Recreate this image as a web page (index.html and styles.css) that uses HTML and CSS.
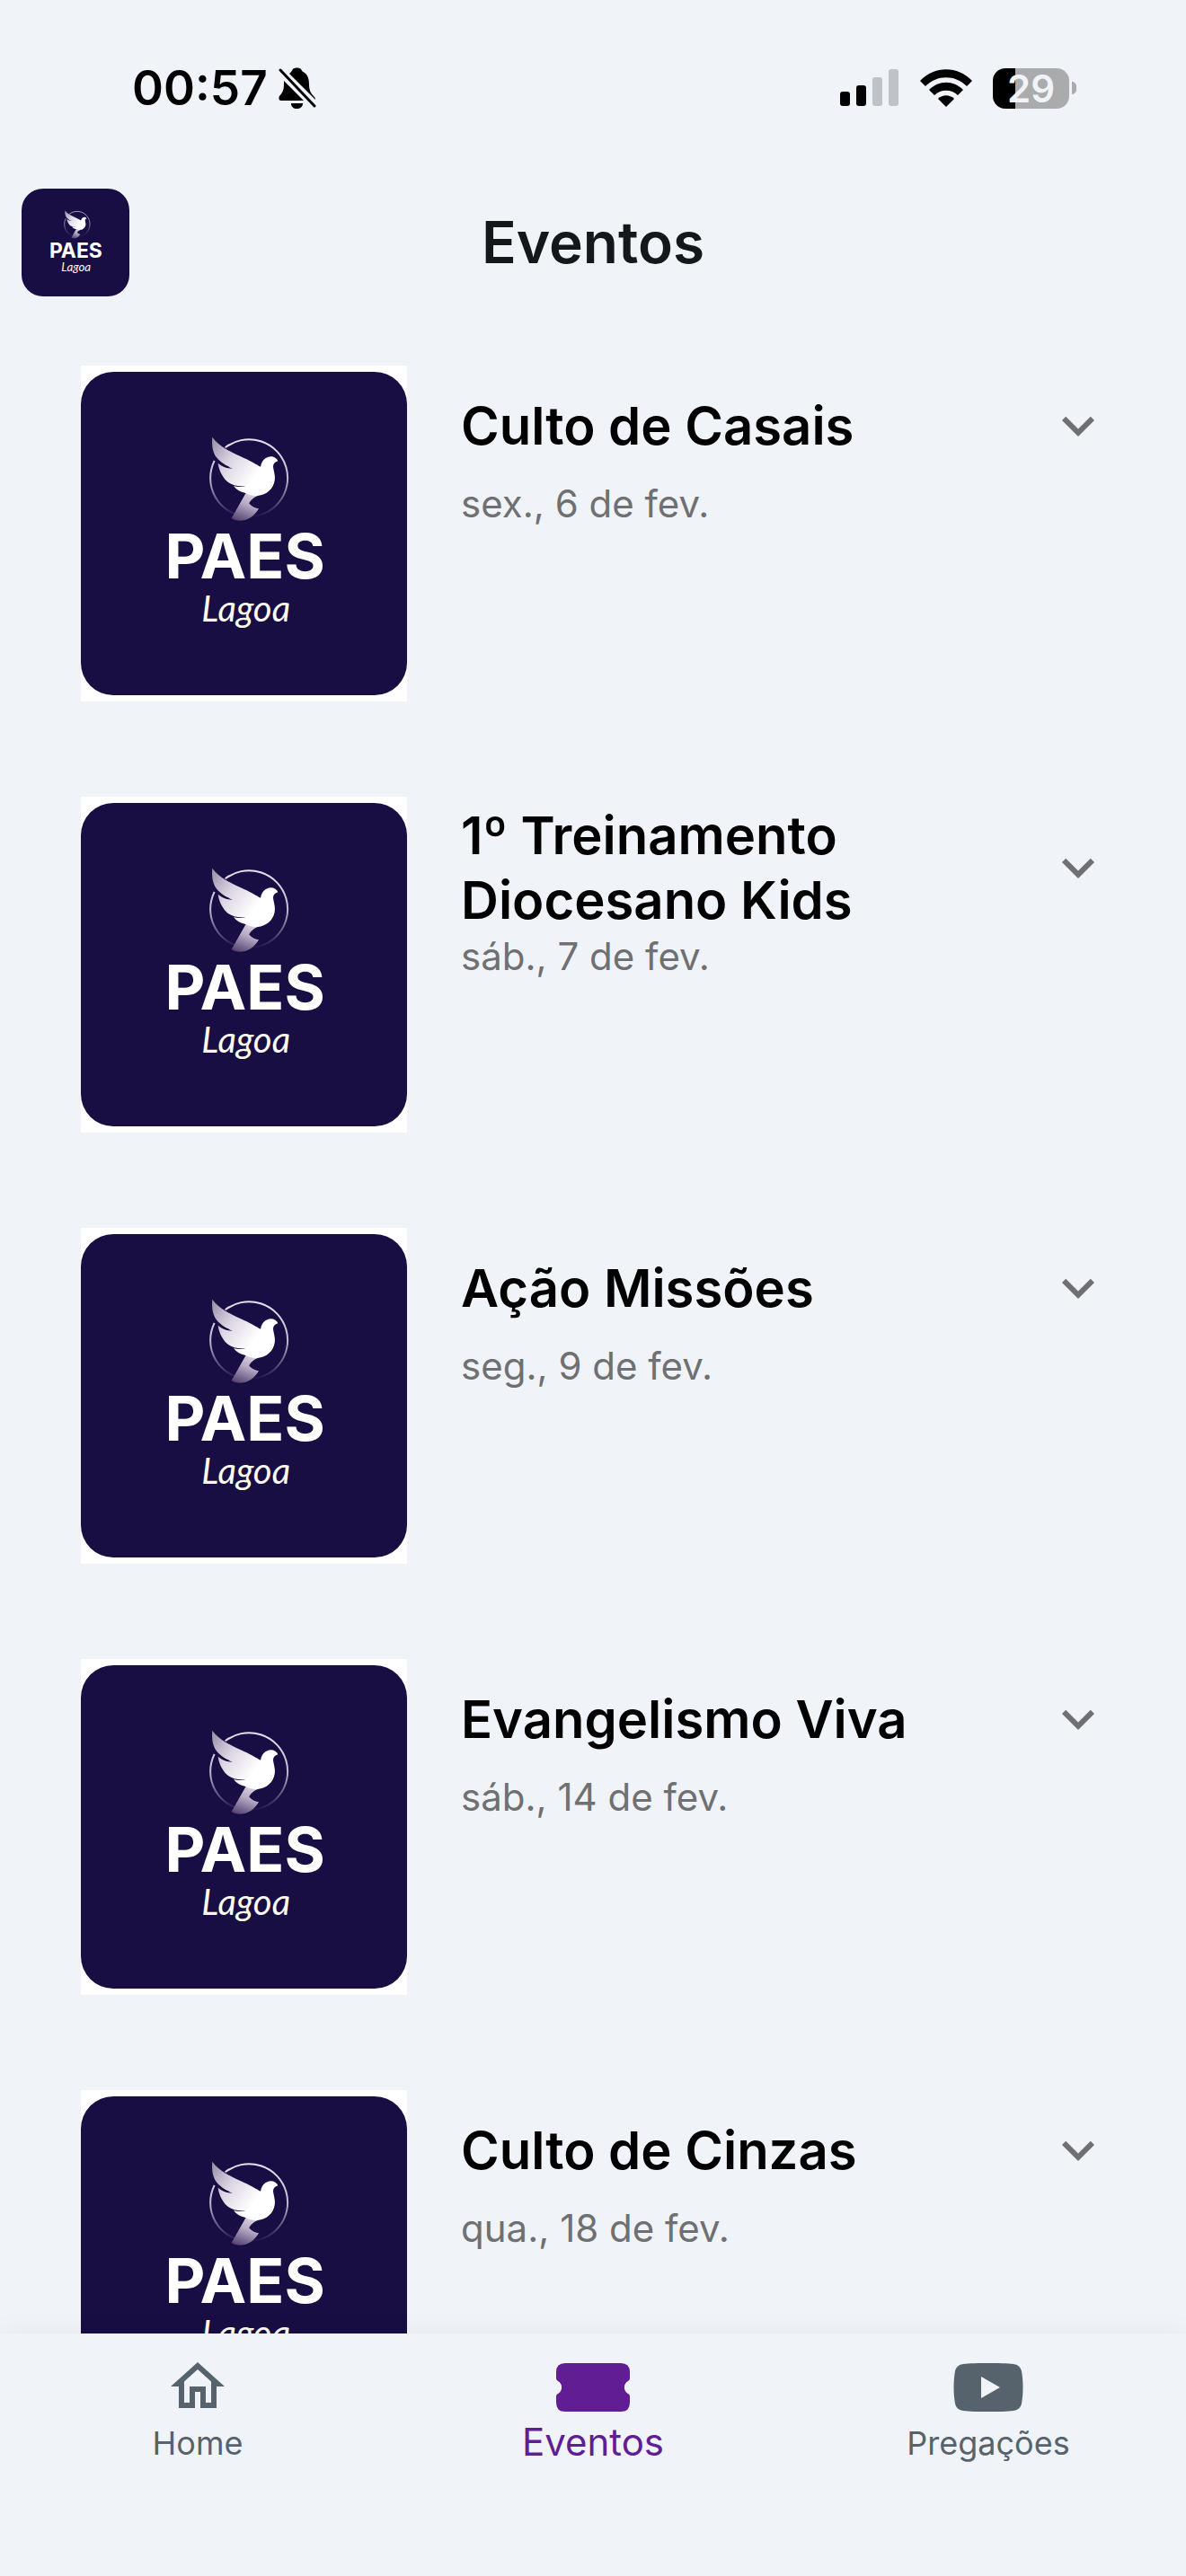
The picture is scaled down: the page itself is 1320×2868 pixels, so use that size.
FILE: index.html
```html
<!DOCTYPE html>
<html lang="pt-BR">
<head>
<meta charset="utf-8">
<meta name="viewport" content="width=device-width, initial-scale=1">
<title>Eventos</title>
<link rel="stylesheet" href="styles.css">
</head>
<body>
<svg class="defs" aria-hidden="true">
  <defs>
    <linearGradient id="wing" gradientUnits="userSpaceOnUse" x1="465" y1="300" x2="610" y2="410">
      <stop offset="0" stop-color="#a294b0"/><stop offset=".45" stop-color="#dcd5e4"/><stop offset="1" stop-color="#fff"/>
    </linearGradient>
    <linearGradient id="tail" gradientUnits="userSpaceOnUse" x1="605" y1="465" x2="570" y2="556">
      <stop offset="0" stop-color="#d8d0e0"/><stop offset=".4" stop-color="#b9adc6"/><stop offset="1" stop-color="#5b4a78"/>
    </linearGradient>
    <linearGradient id="ring" gradientUnits="userSpaceOnUse" x1="590" y1="280" x2="590" y2="545">
      <stop offset="0" stop-color="#e8e2f0"/><stop offset=".5" stop-color="#c3b8d2"/><stop offset="1" stop-color="#180e44"/>
    </linearGradient>
    <symbol id="logo" viewBox="30 57 1089 1080">
      <path d="M512 310A129 129 0 1 1 476 354" fill="none" stroke="url(#ring)" stroke-width="6"/>
      <path d="M582 460L533 546C545 553 560 556 575 553C598 547 612 534 624 514C614 512 602 508 592 497C594 488 604 478 622 470Z" fill="url(#tail)"/>
      <path d="M469 275C490 305 530 325 575 345C600 356 615 366 630 374C634 352 648 341 664 340C676 340 684 346 688 355C678 358 672 364 672 374C674 390 680 402 677 420C673 448 650 468 620 471C606 472 592 468 580 462C562 458 548 450 540 438C554 442 568 441 580 438C550 440 530 435 515 420C500 403 490 382 488 362C502 374 518 380 537 380C505 367 485 350 476 332C468 315 467 295 469 275Z" fill="url(#wing)"/>
      <text class="logo-name" x="578" y="748" text-anchor="middle">PAES</text>
      <text class="logo-place" x="581" y="890" text-anchor="middle">Lagoa</text>
    </symbol>
    <symbol id="chevron" viewBox="0 0 24 24">
      <path d="M16.59 8.59L12 13.17 7.41 8.59 6 10l6 6 6-6z" fill="currentColor"/>
    </symbol>
  </defs>
</svg>

<div class="app">
  <div class="status">
    <div class="status-side">
      <time class="clock">00:57</time>
      <svg class="bell" viewBox="0 0 42 46" role="img" aria-label="Silencioso">
        <path d="M12 7C14 5 15 4 16 2C18 0 23 0 25 2C26 4 27 5 29 6C33 9 34 14 34 19C34 25 36 29 39 32C41 34 41 35 41 36Z"/>
        <path d="M6 15L28 37H3C0 37 0 34 1 32C4 29 6 25 6 20Z"/>
        <path d="M2 3L40 43" fill="none" stroke="#000" stroke-width="3" stroke-linecap="round"/>
        <path d="M14 40H27C27 44 24 46 20 46C17 46 14 44 14 40Z"/>
      </svg>
    </div>
    <div class="status-side">
      <svg class="signal" viewBox="0 0 66 42" role="img" aria-label="Sinal">
        <rect x="0" y="25" width="11" height="16" rx="3"/><rect x="18" y="18" width="11" height="23" rx="3"/>
        <g fill="#bec3c7"><rect x="36" y="9" width="11" height="32" rx="3"/><rect x="54" y="0" width="11" height="41" rx="3"/></g>
      </svg>
      <svg class="wifi" viewBox="0 0 58 42" role="img" aria-label="Wi-Fi">
        <path d="M0 13C16-4 42-4 58 13L52 19C39 6 19 6 6 19Z"/>
        <path d="M10 23C21 12 37 12 48 23L42 29C35 22 23 22 16 29Z"/>
        <path d="M20 33C25 28 33 28 38 33L29 42Z"/>
      </svg>
      <div class="battery"><span class="battery-body">29</span><span class="battery-tip"></span></div>
    </div>
  </div>

  <header class="topbar">
    <svg class="topbar-logo" role="img" aria-label="PAES Lagoa"><use href="#logo"/></svg>
    <h1 class="topbar-title">Eventos</h1>
  </header>

  <main class="events">
    <article class="event">
      <div class="thumb"><svg class="thumb-logo" role="img" aria-label="PAES Lagoa"><use href="#logo"/></svg></div>
      <div class="event-body">
        <div class="event-head"><h2 class="event-title">Culto de Casais</h2>
          <button class="expand" type="button" aria-label="Expandir Culto de Casais"><svg class="chevron"><use href="#chevron"/></svg></button></div>
        <p class="event-date">sex., 6 de fev.</p>
      </div>
    </article>
    <article class="event">
      <div class="thumb"><svg class="thumb-logo" role="img" aria-label="PAES Lagoa"><use href="#logo"/></svg></div>
      <div class="event-body">
        <div class="event-head"><h2 class="event-title">1º Treinamento Diocesano Kids</h2>
          <button class="expand" type="button" aria-label="Expandir 1º Treinamento Diocesano Kids"><svg class="chevron"><use href="#chevron"/></svg></button></div>
        <p class="event-date">sáb., 7 de fev.</p>
      </div>
    </article>
    <article class="event">
      <div class="thumb"><svg class="thumb-logo" role="img" aria-label="PAES Lagoa"><use href="#logo"/></svg></div>
      <div class="event-body">
        <div class="event-head"><h2 class="event-title">Ação Missões</h2>
          <button class="expand" type="button" aria-label="Expandir Ação Missões"><svg class="chevron"><use href="#chevron"/></svg></button></div>
        <p class="event-date">seg., 9 de fev.</p>
      </div>
    </article>
    <article class="event">
      <div class="thumb"><svg class="thumb-logo" role="img" aria-label="PAES Lagoa"><use href="#logo"/></svg></div>
      <div class="event-body">
        <div class="event-head"><h2 class="event-title">Evangelismo Viva</h2>
          <button class="expand" type="button" aria-label="Expandir Evangelismo Viva"><svg class="chevron"><use href="#chevron"/></svg></button></div>
        <p class="event-date">sáb., 14 de fev.</p>
      </div>
    </article>
    <article class="event">
      <div class="thumb"><svg class="thumb-logo" role="img" aria-label="PAES Lagoa"><use href="#logo"/></svg></div>
      <div class="event-body">
        <div class="event-head"><h2 class="event-title">Culto de Cinzas</h2>
          <button class="expand" type="button" aria-label="Expandir Culto de Cinzas"><svg class="chevron"><use href="#chevron"/></svg></button></div>
        <p class="event-date">qua., 18 de fev.</p>
      </div>
    </article>
  </main>

  <nav class="tabs">
    <a class="tab" href="#home">
      <svg class="tab-icon" viewBox="0 0 24 24"><path d="M12 5.69l5 4.5V18h-2v-6H9v6H7v-7.81l5-4.5M12 3L2 12h3v8h6v-6h2v6h6v-8h3z"/></svg>
      <span class="tab-label">Home</span>
    </a>
    <a class="tab tab-active" href="#eventos" aria-current="page">
      <svg class="tab-icon tab-icon-wide" viewBox="0 0 84 72"><path d="M11 10H73Q83 10 83 20V27Q83 29 81 30A8 8 0 0 0 81 44Q83 45 83 47V54Q83 64 73 64H11Q1 64 1 54V47Q1 45 3 44A8 8 0 0 0 3 30Q1 29 1 27V20Q1 10 11 10Z"/></svg>
      <span class="tab-label">Eventos</span>
    </a>
    <a class="tab" href="#pregacoes">
      <svg class="tab-icon tab-icon-wide" viewBox="0 0 84 72"><path fill-rule="evenodd" d="M42 10C52 10 64 10 70 11C76 12 78 15 79 19C81 30 81 44 79 55C78 59 76 62 70 63C64 64 52 64 42 64C32 64 20 64 14 63C8 62 6 59 5 55C3 44 3 30 5 19C6 15 8 12 14 11C20 10 32 10 42 10ZM34 25V49L55 37Z"/></svg>
      <span class="tab-label">Pregações</span>
    </a>
  </nav>
</div>
</body>
</html>
```
FILE: styles.css
```css
* { box-sizing: border-box; }

body {
  margin: 0;
  background: #f0f4f9;
  color: #000;
  font-family: Inter, "Liberation Sans", sans-serif;
}

h1, h2, p { margin: 0; }

.defs { position: absolute; width: 0; height: 0; }

.app {
  display: flex;
  flex-direction: column;
  height: 100vh;
}

.status {
  display: flex;
  justify-content: space-between;
  align-items: center;
  padding: 66px 122px 36px 147px;
}

.status-side { display: flex; align-items: center; gap: 12px; }
.status-side + .status-side { gap: 23px; }

.clock { font-size: 53px; line-height: 64px; font-weight: 600; }
.bell { width: 42px; height: 46px; }
.signal { width: 66px; height: 42px; }
.wifi { width: 58px; height: 42px; }

.battery { display: flex; align-items: center; gap: 3px; }

.battery-body {
  width: 85px;
  border-radius: 14px;
  background: linear-gradient(to right, #000 25px, #a9abad 25px);
  color: #f0f4f9;
  font-size: 42px;
  line-height: 45px;
  font-weight: 600;
  text-align: center;
}

.battery-tip {
  width: 5px;
  height: 14px;
  border-radius: 0 6px 6px 0;
  background: #a9abad;
}

.topbar {
  display: grid;
  grid-template-columns: 1fr auto 1fr;
  align-items: center;
  padding: 44px 24px 24px;
}

.topbar-logo {
  width: 120px;
  height: 120px;
  border-radius: 24px;
  background: #180e44;
}

.topbar-title {
  color: #14181b;
  font-size: 64px;
  line-height: 80px;
  font-weight: 600;
}

.logo-name { fill: #fff; font-size: 208px; font-weight: 700; }

.logo-place {
  fill: #fffaf0;
  font-family: Lato, "Liberation Sans", sans-serif;
  font-size: 120px;
  font-style: italic;
}

.events {
  flex: 1;
  min-height: 0;
  display: flex;
  flex-direction: column;
  gap: 106px;
  padding: 53px 84px 53px 90px;
  overflow-y: auto;
  scrollbar-width: none;
}

.event { display: flex; gap: 60px; }

.thumb { flex: none; align-self: flex-start; padding: 7px 0; background: #fff; }

.thumb-logo {
  display: block;
  width: 363px;
  height: 360px;
  border-radius: 36px;
  background: #180e44;
}

.event-body { flex: 1; min-width: 0; padding-top: 7px; }

.event-head {
  display: flex;
  align-items: center;
  justify-content: space-between;
  min-height: 120px;
}

.event-title { font-size: 58px; line-height: 72px; font-weight: 600; }

.expand {
  flex: none;
  padding: 0;
  border: 0;
  background: none;
  color: #6f7072;
}

.chevron { display: block; width: 72px; height: 72px; }

.event-date {
  color: #6f7072;
  font-size: 42px;
  line-height: 54px;
  font-weight: 400;
}

.tabs {
  position: relative;
  display: grid;
  grid-template-columns: repeat(3, 1fr);
  padding: 23px 0 121px;
  background: #f0f4f9;
  box-shadow: 0 0 30px rgba(0, 0, 0, 0.05);
}

.tab {
  display: flex;
  flex-direction: column;
  align-items: center;
  color: #57636c;
  text-decoration: none;
}

.tab-icon { width: 72px; height: 72px; fill: currentColor; }
.tab-icon-wide { width: 84px; }

.tab-label { font-size: 36px; line-height: 54px; }

.tab-active { color: #611e94; }
.tab-active .tab-label { font-size: 42px; line-height: 52px; }
```
